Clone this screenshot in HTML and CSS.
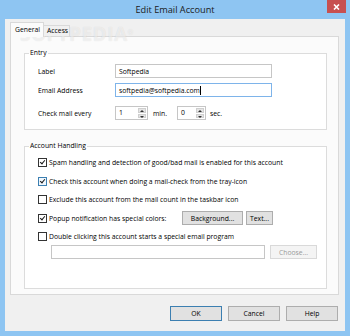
FILE: index.html
```html
<!DOCTYPE html>
<html>
<head>
<meta charset="utf-8">
<link rel="stylesheet" href="styles.css">
</head>
<body>
<div class="window">
  <div class="titlebar">
    <span></span>
    <span class="title">Edit Email Account</span>
    <div class="close"><svg width="7" height="6" viewBox="0 0 7 6"><path d="M1 0.5L6 5.5M6 0.5L1 5.5" stroke="#fff" stroke-width="1.6"/></svg></div>
  </div>
  <div class="client">
    <div class="tabs">
      <div class="tab active">General</div>
      <div class="tab">Access</div>
    </div>
    <div class="panel">
      <fieldset class="group entry">
        <legend>Entry</legend>
        <div class="field-row"><span class="field-label">Label</span><div class="textbox">Softpedia</div></div>
        <div class="field-row"><span class="field-label">Email Address</span><div class="textbox focus">softpedia@softpedia.com<span class="caret"></span></div></div>
        <div class="field-row spin-row"><span class="field-label">Check mail every</span>
          <div class="spin"><span class="spin-val">1</span><span class="spin-btns"><i class="up"></i><i class="down"></i></span></div>
          <span class="unit min">min.</span>
          <div class="spin small"><span class="spin-val">0</span><span class="spin-btns"><i class="up"></i><i class="down"></i></span></div>
          <span class="unit sec">sec.</span>
        </div>
      </fieldset>
      <fieldset class="group handling">
        <legend>Account Handling</legend>
        <div class="check-row r19"><span class="cb checked"></span>Spam handling and detection of good/bad mail is enabled for this account</div>
        <div class="check-row r18"><span class="cb checked hover"></span>Check this account when doing a mail-check from the tray-icon</div>
        <div class="check-row r19"><span class="cb"></span>Exclude this account from the mail count in the taskbar icon</div>
        <div class="check-row r18"><span class="cb checked"></span><span class="popup-label">Popup notification has special colors:</span><span class="btn bg-btn">Background...</span><span class="btn text-btn">Text...</span></div>
        <div class="check-row r18"><span class="cb"></span>Double clicking this account starts a special email program</div>
        <div class="path-row"><div class="textbox path"></div><span class="btn disabled choose">Choose...</span></div>
      </fieldset>
    </div>
    <div class="buttons">
      <span class="btn dlg default">OK</span>
      <span class="btn dlg">Cancel</span>
      <span class="btn dlg">Help</span>
    </div>
  </div>
  <div class="watermark">SOFTPEDIA<sup>®</sup></div>
</div>
</body>
</html>
```
FILE: styles.css
```css
* { box-sizing: border-box; }
html, body { margin: 0; padding: 0; }
body {
  width: 350px;
  height: 336px;
  overflow: hidden;
  background: #8ec5f2;
  font-family: "Open Sans", "Noto Sans", sans-serif;
  font-size: 6.8px;
  color: #000;
}
.window {
  position: relative;
  width: 350px;
  height: 336px;
  display: flex;
  flex-direction: column;
}
.titlebar {
  height: 19px;
  flex: 0 0 19px;
  display: grid;
  grid-template-columns: 1fr auto 1fr;
  align-items: start;
}
.title {
  font-size: 9.2px;
  color: #1b1b1b;
  line-height: 19px;
}
.close {
  justify-self: end;
  margin-right: 4px;
  width: 19px;
  height: 13px;
  background: #c75050;
  display: flex;
  align-items: center;
  justify-content: center;
}
.client {
  flex: 1;
  margin: 0 5px 5px;
  background: #f0f0f0;
  padding: 3px 6px 0 5px;
  display: flex;
  flex-direction: column;
}
.tabs {
  display: flex;
  align-items: flex-end;
  height: 14px;
  position: relative;
  z-index: 1;
}
.tab {
  height: 11px;
  border: 1px solid #d9d9d9;
  border-bottom: none;
  background: #f0f0f0;
  padding: 0 3px;
  line-height: 10px;
}
.tab.active {
  height: 15px;
  margin-bottom: -1px;
  width: 34px;
  background: #fbfbfb;
  padding: 0 0 0 4px;
  line-height: 13px;
}
.tab + .tab { border-left: none; width: 26px; }
.panel {
  height: 259px;
  border: 1px solid #d9d9d9;
  background: #fbfbfb;
  padding: 11px 11px 0 13px;
  display: flex;
  flex-direction: column;
}
.group {
  margin: 0;
  width: 303px;
  border: 1px solid #dcdcdc;
  background: #fff;
  padding: 0 0 0 13px;
  min-width: 0;
}
.group legend {
  padding: 0 1px;
  margin-left: -9px;
  line-height: 10px;
}
.entry { padding-top: 6px; padding-bottom: 9px; }
.handling { margin-top: 11px; padding-top: 2px; padding-bottom: 29px; }
.field-row {
  display: flex;
  align-items: center;
  height: 14px;
}
.field-row + .field-row { margin-top: 5px; }
.field-row.spin-row { margin-top: 9px; }
.field-label { width: 77px; flex: 0 0 77px; }
.textbox {
  width: 157px;
  height: 14px;
  border: 1px solid #c6c6c6;
  background: #fff;
  padding: 0 3px;
  display: flex;
  align-items: center;
}
.textbox.focus { border-color: #7eb4ea; }
.caret { width: 1px; height: 9px; background: #000; margin-left: 0.5px; }
.spin {
  width: 33px;
  height: 14px;
  border: 1px solid #c6c6c6;
  background: #fff;
  display: flex;
}
.spin.small { width: 29px; }
.spin-val { flex: 1; padding-left: 3px; line-height: 12px; }
.spin-btns {
  width: 8px;
  margin: 1px 1px 1px 0;
  display: flex;
  flex-direction: column;
  gap: 1px;
}
.spin-btns i {
  flex: 1;
  background: #e5e5e5;
  border: 1px solid #cfcfcf;
  position: relative;
}
.spin-btns i::after {
  content: "";
  position: absolute;
  left: 1px;
  border-left: 2px solid transparent;
  border-right: 2px solid transparent;
}
.spin-btns i.up::after { top: 1px; border-bottom: 2px solid #333; }
.spin-btns i.down::after { top: 1px; border-top: 2px solid #333; }
.unit.min { width: 29px; padding-left: 5px; }
.unit.sec { padding-left: 4px; }
.check-row {
  display: flex;
  align-items: center;
}
.r19 { height: 19px; }
.r18 { height: 18px; }
.cb {
  width: 9px;
  height: 9px;
  flex: 0 0 9px;
  border: 1px solid #333;
  background: #fff;
  margin-right: 2px;
  position: relative;
}
.cb.hover { border-color: #3c7fb1; background: #f0f7fd; }
.cb.checked::after {
  content: "";
  position: absolute;
  left: 2px;
  top: 0px;
  width: 2px;
  height: 4px;
  border: solid #1a1a1a;
  border-width: 0 1.5px 1.5px 0;
  transform: rotate(40deg);
}
.popup-label { width: 133px; flex: 0 0 133px; }
.btn {
  display: flex;
  align-items: center;
  justify-content: center;
  height: 14px;
  border: 1px solid #adadad;
  background: #e1e1e1;
}
.bg-btn { width: 61px; }
.text-btn { width: 27px; margin-left: 3px; }
.path-row { display: flex; align-items: center; height: 14px; padding-left: 13px; }
.textbox.path { width: 214px; }
.choose { width: 47px; margin-left: 5px; }
.btn.disabled { background: #f4f4f4; border-color: #d9d9d9; color: #9a9a9a; }
.buttons {
  display: flex;
  justify-content: flex-end;
  gap: 6px;
  margin-top: 11px;
  margin-right: 1px;
}
.btn.dlg { width: 52px; height: 15px; }
.btn.default { border-color: #3c7fb1; }
.watermark {
  position: absolute;
  left: 20px;
  top: 27px;
  font-family: "Open Sans", sans-serif;
  font-weight: 700;
  font-size: 19px;
  line-height: 15px;
  letter-spacing: 0.5px;
  color: rgba(255, 255, 255, 0.55);
  text-shadow: 0 0 1px rgba(0, 0, 0, 0.12);
  pointer-events: none;
}
.watermark sup { font-size: 7px; line-height: 0; vertical-align: 6px; }
```
